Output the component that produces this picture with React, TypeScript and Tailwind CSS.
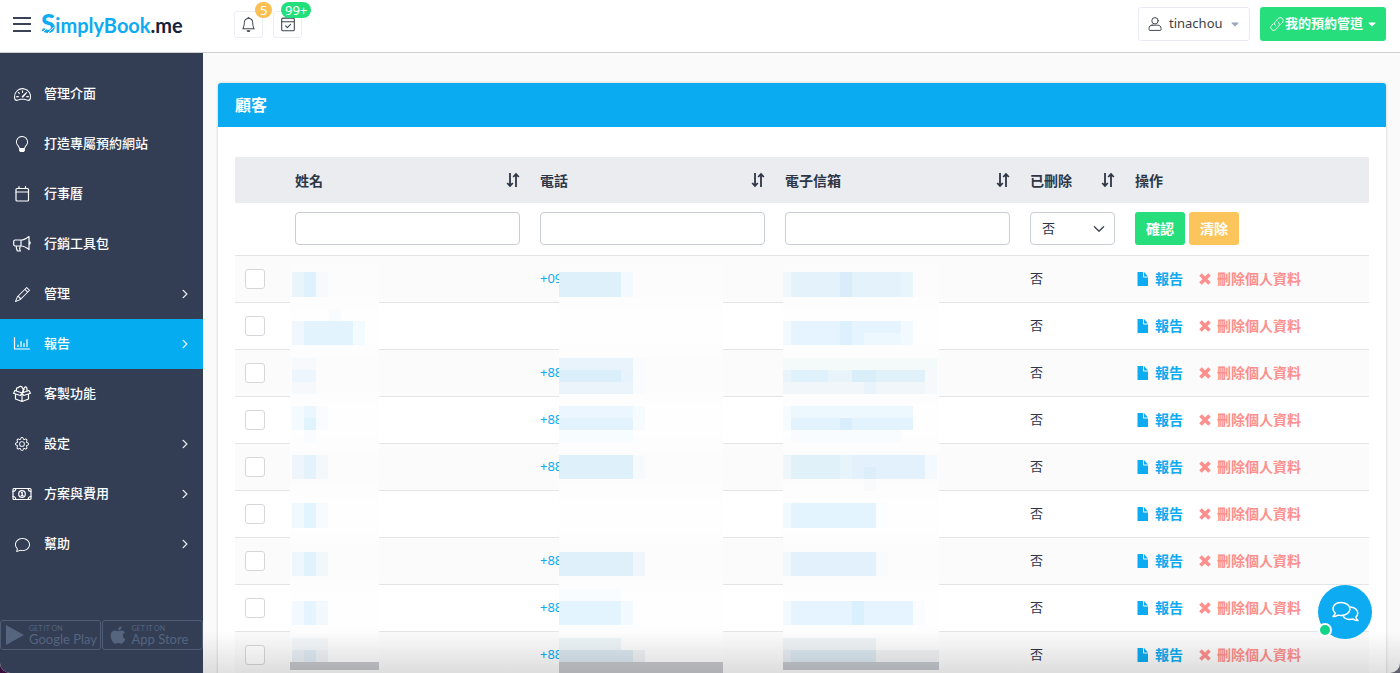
import type { ReactNode } from 'react'
import { BsBell, BsChat, BsChevronDown, BsChevronRight, BsGear, BsLightbulb, BsPencil, BsSpeedometer2 } from 'react-icons/bs'
import { FaApple, FaCaretDown } from 'react-icons/fa'

function LineIcon({ children, className = 'h-5 w-5' }: { children: ReactNode; className?: string }) {
  return (
    <svg viewBox="0 0 20 20" className={className} fill="none" stroke="currentColor" strokeWidth="1.2" strokeLinejoin="round" strokeLinecap="round" aria-hidden="true">
      {children}
    </svg>
  )
}

function CalendarIcon() {
  return (
    <LineIcon>
      <rect x="4" y="4.500" width="12.500" height="12.500" rx="1" />
      <path d="M4 8h12.500M7 2.500v2M13.500 2.500v2" />
    </LineIcon>
  )
}

function MegaphoneIcon() {
  return (
    <LineIcon>
      <path d="M9 6H3.200A1.500 1.500 0 0 0 1.700 7.500v3A1.500 1.500 0 0 0 3.200 12H9c3 0 5.500 1.500 8 3.500v-13C14.500 4.500 12 6 9 6zM9 6v6M4.200 12c0 1.800.3 3.200 1.200 5h3c-.8-1.400-1-3-.2-5M17 7.700c1.600.2 1.600 2.400 0 2.600" />
    </LineIcon>
  )
}

function ChartIcon() {
  return (
    <LineIcon>
      <path d="M2.500 3.500v11.500h15M6 12.500v-1.500M9 12.500v-5M12 12.500v-3M15 12.500v-7" />
    </LineIcon>
  )
}

function GiftIcon() {
  return (
    <LineIcon>
      <path d="M3.500 10.500v4.500l6.500 2.500 6.500-2.500v-4.500M10 9.500v8M3 6.500l7 2.500 7-2.500M3 6.500L1.500 9.300l6.700 2.200L10 9l1.800 2.500 6.700-2.200L17 6.500M4.500 6.800C4 4.500 5 3.200 6.500 3.700 7 1.800 10 1.800 10.500 4c1 1 .9 2.500-.5 5M11.500 8.300V5.500M12 5.500c0-3.500 3-3.500 3 0v1.500" />
    </LineIcon>
  )
}

function MoneyIcon() {
  return (
    <LineIcon>
      <rect x="1" y="4.500" width="18" height="11" rx="1" />
      <circle cx="10" cy="10" r="3.300" />
      <path d="M9.300 8.800l.9-.5v3.400M9.200 11.700h1.900M1 7.500c1.700 0 2.800-1.200 2.800-3M19 7.500c-1.700 0-2.800-1.200-2.800-3M1 12.500c1.700 0 2.800 1.200 2.800 3M19 12.500c-1.700 0-2.800 1.200-2.800 3" />
    </LineIcon>
  )
}

function UserIcon() {
  return (
    <LineIcon className="h-4 w-4">
      <circle cx="10" cy="6" r="4" />
      <path d="M6.500 11.500h7c2.500 0 4 1.500 4 4v1.500c0 .6-.4 1-1 1h-13c-.6 0-1-.4-1-1v-1.500c0-2.500 1.500-4 4-4z" />
    </LineIcon>
  )
}

function LinkIcon() {
  return (
    <LineIcon className="h-4 w-4">
      <path d="M8.500 12.500c-2-1.500-2-4-.5-5.500l3.500-3.800c1.500-1.500 3.800-1.500 5.200-.1s1.400 3.700 0 5.200l-2 2M11.500 7.500c2 1.500 2 4 .5 5.500l-3.500 3.800c-1.500 1.500-3.800 1.500-5.200.1s-1.400-3.700 0-5.200l2-2" />
    </LineIcon>
  )
}

function SortIcon() {
  return (
    <svg viewBox="0 0 14 16" className="h-4 w-[14px]" fill="none" stroke="currentColor" strokeWidth="1.800" aria-hidden="true">
      <path d="M4 1v12.500M1.200 11l2.800 3 2.800-3M10 15v-12.500M7.200 5l2.800-3 2.800 3" />
    </svg>
  )
}

function FileIcon() {
  return (
    <svg viewBox="0 0 12 14" className="h-[14px] w-3" fill="currentColor" aria-hidden="true">
      <path d="M.500 0h5.500v4.700c0 .5.3.8.8.8H11V13.500a.5.5 0 0 1-.5.5H.5zM7 0l4 4.500H7z" />
    </svg>
  )
}

function CrossIcon() {
  return (
    <svg viewBox="0 0 12 12" className="h-3 w-3" fill="none" stroke="currentColor" strokeWidth="3.600" aria-hidden="true">
      <path d="M1.500 1.500l9 9M10.500 1.500l-9 9" />
    </svg>
  )
}

const navItems = [
  { label: '管理介面', icon: <BsSpeedometer2 className="h-[17px] w-[17px]" /> },
  { label: '打造專屬預約網站', icon: <BsLightbulb className="h-4 w-4" /> },
  { label: '行事曆', icon: <CalendarIcon /> },
  { label: '行銷工具包', icon: <MegaphoneIcon /> },
  { label: '管理', icon: <BsPencil className="h-[15px] w-[15px]" />, more: true },
  { label: '報告', icon: <ChartIcon />, more: true, active: true },
  { label: '客製功能', icon: <GiftIcon /> },
  { label: '設定', icon: <BsGear className="h-[14px] w-[14px]" />, more: true },
  { label: '方案與費用', icon: <MoneyIcon />, more: true },
  { label: '幫助', icon: <BsChat className="h-[15px] w-[15px]" />, more: true },
]

const phones = ['+09', '', '+88', '+88', '+88', '', '+88', '+88', '+88']

// x, y, width, height, fill
type Block = [number, number, number, number, string]

const nameBlocks: Block[] = [
  [2, 15, 12, 25, '#e9f5fb'], [14, 15, 12, 25, '#dff1fd'], [26, 15, 12, 25, '#f6fafd'],
  [39, 52, 12, 12, '#f8fcff'],
  [2, 64, 12, 24, '#f0f8fe'], [14, 64, 49, 24, '#e2f3fe'], [63, 64, 12, 24, '#f4fbff'],
  [2, 101, 24, 12, '#f6fafc'], [2, 113, 24, 12, '#edf6fc'], [2, 125, 24, 12, '#f6f9fc'],
  [2, 149, 12, 24, '#f4fbff'], [14, 149, 12, 12, '#ebf7fe'], [14, 161, 12, 12, '#e0f4fe'], [26, 149, 12, 24, '#f8fcff'], [14, 173, 12, 12, '#f9fcff'],
  [2, 198, 12, 24, '#eef6fb'], [14, 198, 12, 24, '#e4f2fc'], [26, 198, 12, 24, '#f2f8fc'],
  [2, 246, 12, 25, '#f0f9fe'], [14, 246, 12, 25, '#e2f4fe'], [26, 246, 12, 25, '#f5fbff'],
  [2, 295, 12, 24, '#eef7fb'], [14, 295, 12, 24, '#e0f2fc'], [26, 295, 12, 24, '#f0f8fc'],
  [2, 344, 12, 24, '#f2faff'], [14, 344, 12, 24, '#e5f4fe'], [26, 344, 12, 24, '#f2f9fe'],
  [2, 381, 36, 12, '#f4f7f9'], [2, 393, 12, 12, '#e8eff5'], [14, 393, 12, 12, '#deeaf3'], [26, 393, 12, 12, '#eef2f6'],
  [0, 405, 89, 8, '#c6c7cb'],
]

const phoneBlocks: Block[] = [
  [0, 15, 62, 25, '#def0fa'], [62, 15, 12, 25, '#f3f9fd'],
  [0, 101, 74, 12, '#e9f3fb'], [0, 113, 62, 12, '#dbeffa'], [62, 113, 12, 12, '#e6f3fc'], [0, 125, 74, 12, '#ebf4fb'], [74, 101, 12, 36, '#f9fbfc'],
  [0, 149, 74, 12, '#ebf6fe'], [0, 161, 74, 12, '#e2f3fe'], [0, 173, 74, 12, '#f7fcfe'], [74, 149, 12, 24, '#f6fbfe'],
  [0, 198, 74, 24, '#def0fa'], [74, 198, 12, 24, '#f6fafd'],
  [0, 295, 74, 24, '#e0f0fb'], [74, 295, 12, 24, '#eff6fc'],
  [0, 332, 62, 12, '#f8fcfe'], [0, 344, 62, 24, '#e3f4fe'], [62, 344, 12, 24, '#f3faff'],
  [0, 381, 62, 12, '#edf4f7'], [0, 393, 74, 12, '#dae6ef'], [74, 393, 12, 12, '#eef1f4'],
  [0, 405, 164, 12, '#c6c8cc'],
]

const emailBlocks: Block[] = [
  [0, 15, 8, 25, '#f0f8fc'], [8, 15, 122, 25, '#e3f2fb'], [57, 15, 12, 25, '#d8edf9'], [118, 15, 12, 25, '#e9f5fd'],
  [0, 64, 8, 24, '#f2faff'], [8, 64, 110, 24, '#e5f4fe'], [57, 64, 12, 24, '#dcf1fd'], [81, 76, 37, 12, '#edf7fe'], [118, 64, 12, 24, '#f3faff'],
  [0, 101, 154, 12, '#f4f9fa'], [0, 113, 142, 12, '#e8f4fa'], [8, 113, 37, 12, '#dff1fa'], [69, 113, 24, 12, '#d9eef9'], [93, 113, 49, 12, '#e1f1fa'], [0, 125, 142, 12, '#f1f6fa'], [81, 125, 12, 12, '#e8f3fb'], [142, 113, 12, 24, '#f6f9fb'],
  [8, 149, 122, 12, '#edf7fe'], [8, 161, 122, 12, '#e3f3fe'], [57, 161, 12, 12, '#d8eefc'], [8, 173, 110, 12, '#f8fcff'], [0, 149, 8, 24, '#f5fbff'],
  [0, 198, 8, 24, '#eff6fa'], [8, 198, 49, 24, '#e0f1fa'], [57, 198, 12, 24, '#e8f4fc'], [69, 198, 73, 24, '#e2f1fb'], [81, 210, 12, 12, '#dceefa'], [142, 198, 12, 24, '#f4f9fd'], [81, 222, 12, 12, '#f8fafc'],
  [0, 246, 8, 25, '#f0f9fe'], [8, 246, 85, 25, '#e4f4fe'], [93, 246, 12, 25, '#fbfdff'],
  [0, 295, 8, 24, '#f0f8fb'], [8, 295, 85, 24, '#e2f1fb'], [93, 295, 12, 24, '#f8fafc'],
  [0, 344, 8, 24, '#f3faff'], [8, 344, 122, 24, '#e5f4fe'], [69, 344, 12, 24, '#daf0fe'], [130, 344, 12, 24, '#fafcff'],
  [0, 381, 93, 12, '#eef3f5'], [0, 393, 8, 12, '#e5ecf1'], [8, 393, 85, 12, '#dae7ef'], [93, 393, 63, 12, '#f0f1f2'],
  [0, 405, 156, 8, '#c4c7cc'],
]

// hides the contact details and the row lines that run behind them
function Mosaic({ width, blocks, className }: { width: number; blocks: Block[]; className: string }) {
  return (
    <svg width={width} height={417} className={`pointer-events-none absolute top-px max-w-none ${className}`} shapeRendering="crispEdges" aria-hidden="true">
      {phones.map((_, i) => (
        <g key={i}>
          <rect x={0} y={i * 47 + 6} width={width} height={36} fill={i % 2 ? '#fefefe' : '#fcfcfc'} />
          <rect x={0} y={i * 47 + 40} width={width} height={14} fill="#fdfdfd" />
        </g>
      ))}
      {blocks.map(([x, y, w, h, fill], i) => (
        <rect key={i} x={x} y={y} width={w} height={h} fill={fill} />
      ))}
    </svg>
  )
}

function Header() {
  return (
    <header className="flex h-[53px] shrink-0 items-center border-b border-[#cfcfd1] bg-white pr-[14px] pl-[13px] pb-1">
      <button type="button" aria-label="Menu" className="flex h-[15px] w-[18px] flex-col justify-between">
        <span className="h-[2px] w-full bg-[#3a4355]" />
        <span className="h-[2px] w-full bg-[#3a4355]" />
        <span className="h-[2px] w-full bg-[#3a4355]" />
      </button>
      <a href="#" className="ml-[10px] flex w-[193px] items-baseline font-[Lato,sans-serif] text-[20px] leading-7 font-bold text-[#0dabf1]">
        <span className="relative text-[26px] font-black">
          S
          <svg viewBox="0 0 16 22" className="absolute top-[5px] left-0 h-[22px] w-4" fill="none" stroke="#fff" strokeWidth="1" aria-hidden="true">
            <path d="M2 18L9 11M6 20l7-7M9 6l5-3" />
          </svg>
        </span>
        <span>
          implyBook<span className="text-[#16223a]">.me</span>
        </span>
      </a>
      <div className="flex gap-[10px]">
        <button type="button" aria-label="通知" className="relative flex h-[27px] w-[29px] items-center justify-center rounded-[3px] border border-[#eceef6] text-[#3f4450]">
          <BsBell className="h-[15px] w-[15px]" />
          <span className="absolute -top-[10px] left-5 rounded-full bg-[#fbc054] px-[5px] text-[13px] leading-4 text-white">5</span>
        </button>
        <button type="button" aria-label="預約" className="relative flex h-[27px] w-[29px] items-center justify-center rounded-[3px] border border-[#eceef6] text-[#3f4450]">
          <LineIcon className="h-[18px] w-[18px]">
            <rect x="3" y="3.500" width="14" height="14" rx="1.500" />
            <path d="M3 7.500h14M7.300 12l2 2 3.600-3.600" />
          </LineIcon>
          <span className="absolute -top-[10px] left-[7px] rounded-full bg-[#1fe07a] px-[4px] text-[13px] leading-4 text-white">99+</span>
        </button>
      </div>
      <button type="button" className="ml-auto flex h-[34px] w-28 items-center rounded-[3px] border border-[#e9ebf5] pr-[8px] pl-2 text-[13px] text-[#3b3f48]">
        <UserIcon />
        <span className="ml-[6px]">tinachou</span>
        <FaCaretDown className="ml-auto h-3 w-3 text-[#9ba4bb]" />
      </button>
      <button type="button" className="ml-[10px] flex h-[34px] items-center rounded-[3px] bg-[#26de7c] pr-2 pl-[9px] text-[13px] font-bold text-white">
        <LinkIcon />
        我的預約管道
        <FaCaretDown className="ml-[3px] h-3 w-3" />
      </button>
    </header>
  )
}

function Sidebar() {
  return (
    <aside className="flex w-[203px] shrink-0 flex-col bg-[#333e55] pt-4 text-white">
      <nav>
        {navItems.map((item) => (
          <a key={item.label} href="#" className={`flex h-[50px] items-center pr-[13px] pl-3 text-[13px] font-medium ${item.active ? 'bg-[#05adf0]' : ''}`}>
            <span className="mr-3 flex w-5 justify-center">{item.icon}</span>
            {item.label}
            {item.more && <BsChevronRight className="ml-auto h-[10px] w-[10px] stroke-1" />}
          </a>
        ))}
      </nav>
      <div className="mt-auto mb-[23px] flex gap-px font-[Lato,sans-serif] text-[#56647d]">
        <a href="#" className="flex h-[30px] flex-1 items-center gap-[5px] rounded-[3px] border border-[#4f5c75] pl-[5px]">
          <svg viewBox="0 0 18 20" className="h-5 w-[18px] shrink-0" fill="currentColor" aria-hidden="true">
            <path d="M0 0l18 10L0 20z" />
          </svg>
          <span>
            <span className="block text-[7px] leading-[8px]">GET IT ON</span>
            <span className="block text-[13px] leading-[14px] whitespace-nowrap">Google Play</span>
          </span>
        </a>
        <a href="#" className="flex h-[30px] flex-1 items-center gap-[5px] rounded-[3px] border border-[#4f5c75] pl-[6px]">
          <FaApple className="h-5 w-[18px]" />
          <span>
            <span className="block text-[7px] leading-[8px]">GET IT ON</span>
            <span className="block text-[13px] leading-[14px] whitespace-nowrap">App Store</span>
          </span>
        </a>
      </div>
    </aside>
  )
}

function SortHeader({ label }: { label: string }) {
  return (
    <th scope="col" className="px-[10px]">
      <button type="button" className="flex w-full items-center justify-between font-bold">
        {label}
        <SortIcon />
      </button>
    </th>
  )
}

function FilterInput({ label }: { label: string }) {
  return (
    <td className="px-[10px]">
      <input type="text" aria-label={label} className="block h-[33px] w-full rounded-[4px] border border-[#c9cdd4] bg-white px-2" />
    </td>
  )
}

function ClientTable() {
  return (
    <table className="w-full table-fixed text-left text-[#2d3646]">
      <colgroup>
        <col className="w-[50px]" />
        <col />
        <col />
        <col />
        <col className="w-[105px]" />
        <col className="w-[244px]" />
      </colgroup>
      <thead className="text-[14px]">
        <tr className="h-[46px] bg-[#ebecef]">
          <td />
          <SortHeader label="姓名" />
          <SortHeader label="電話" />
          <SortHeader label="電子信箱" />
          <SortHeader label="已刪除" />
          <th scope="col" className="px-[10px] font-bold">操作</th>
        </tr>
        <tr className="h-[52px]">
          <td />
          <FilterInput label="姓名" />
          <FilterInput label="電話" />
          <FilterInput label="電子信箱" />
          <td className="px-[10px]">
            <div className="relative">
              <select aria-label="已刪除" className="block h-[33px] w-full appearance-none rounded-[4px] border border-[#c9cdd4] bg-white px-[11px] text-[13px]">
                <option>否</option>
                <option>是</option>
              </select>
              <BsChevronDown className="pointer-events-none absolute top-[11px] right-[10px] h-3 w-3 stroke-1" />
            </div>
          </td>
          <td className="px-[10px]">
            <div className="flex gap-1 font-bold text-white">
              <button type="button" className="h-[33px] rounded-[3px] bg-[#26de7c] px-[11px]">確認</button>
              <button type="button" className="h-[33px] rounded-[3px] bg-[#fbc55b] px-[11px]">清除</button>
            </div>
          </td>
        </tr>
      </thead>
      <tbody className="text-[13px]">
        {phones.map((phone, i) => (
          <tr key={i} className="h-[47px] border-t border-[#e4e5e7] odd:bg-[#fbfbfb]">
            <td className="px-[10px]">
              <input type="checkbox" aria-label={`選取第 ${i + 1} 位顧客`} className="block h-5 w-5 appearance-none rounded-[3px] border border-[#d5d7db] bg-white" />
            </td>
            <td className={i === 0 ? 'relative' : ''}>{i === 0 && <Mosaic width={89} blocks={nameBlocks} className="left-[5px]" />}</td>
            <td className={i === 0 ? 'relative px-[10px]' : 'px-[10px]'}>
              {phone && <a href="#" className="text-[#0dabf1]">{phone}</a>}
              {i === 0 && <Mosaic width={164} blocks={phoneBlocks} className="left-[29px]" />}
            </td>
            <td className={i === 0 ? 'relative' : ''}>{i === 0 && <Mosaic width={156} blocks={emailBlocks} className="left-[8px]" />}</td>
            <td className="px-[10px]">否</td>
            <td className="px-[10px]">
              <div className="flex items-center gap-4 pl-[2px] text-[14px] font-bold">
                <a href="#" className="flex items-center gap-[6px] text-[#0dabf1]">
                  <FileIcon />
                  報告
                </a>
                <a href="#" className="flex items-center gap-[6px] text-[#fd8f8c]">
                  <CrossIcon />
                  刪除個人資料
                </a>
              </div>
            </td>
          </tr>
        ))}
      </tbody>
    </table>
  )
}

export default function App() {
  return (
    <div className="h-screen bg-linear-to-r from-[#3b0d3d] to-[#62626e] font-['Noto_Sans','Noto_Sans_CJK_TC',sans-serif]">
      <div className="relative flex h-full flex-col overflow-hidden rounded-b-[10px] bg-[#fafafa]">
        <Header />
        <div className="flex min-h-0 flex-1">
          <Sidebar />
          <main className="min-w-0 flex-1 overflow-hidden pt-[30px] pr-[14px] pl-[15px]">
            <section className="rounded-[3px] bg-white shadow-[0_0_3px_rgba(0,0,0,0.2)]">
              <h1 className="flex h-11 items-center rounded-t-[3px] bg-[#0aabf0] px-[17px] text-[16px] font-bold text-white">顧客</h1>
              <div className="px-[17px] pt-[30px]">
                <ClientTable />
              </div>
            </section>
          </main>
        </div>
        <div className="pointer-events-none absolute right-0 bottom-0 left-[203px] h-[42px] bg-linear-to-b from-black/0 to-black/12" />
        <button type="button" aria-label="Chat" className="absolute right-[28px] bottom-[34px] flex h-[54px] w-[54px] items-center justify-center rounded-full bg-[#0dabf1] text-white">
          <svg viewBox="0 0 28 22" className="h-[22px] w-7" fill="none" stroke="currentColor" strokeWidth="1.500" strokeLinejoin="round" aria-hidden="true">
            <path d="M4.300 12.200C-.5 7.500 3 1.500 10 1.500c5 0 9 2.800 9 6.500s-4 6.500-9 6.500c-1 0-2-.1-3-.4-1.500 1-3.200 1.400-5 1.400 1-1 1.800-2 2.300-3.300z" />
            <path d="M19 6c4.500 0 7.800 2.800 7.800 6 0 1.500-.7 3-2 4.100.5 1.400 1.200 2.400 2.200 3.400-1.900 0-3.500-.5-4.900-1.400-4.500 1-8.600-.4-10.300-3.600" />
          </svg>
          <span className="absolute bottom-[2px] left-0 h-[14px] w-[14px] rounded-full border-2 border-white bg-[#10d487]" />
        </button>
      </div>
    </div>
  )
}
